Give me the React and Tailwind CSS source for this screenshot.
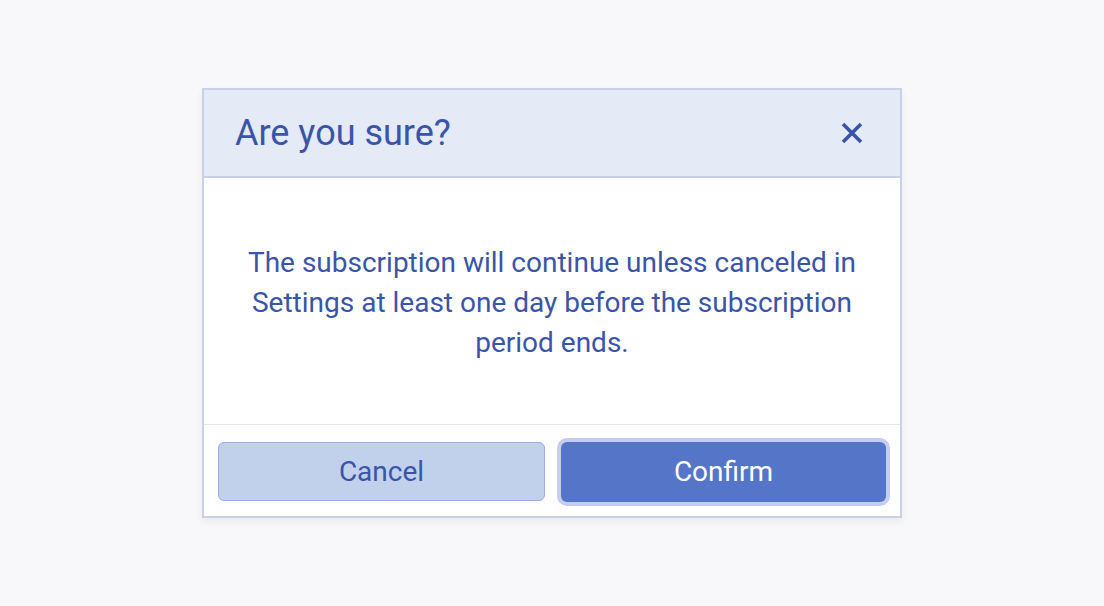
import React from 'react';

const CloseIcon = () => (
  <svg width="22" height="22" viewBox="0 0 22 22" fill="none">
    <path d="M2 2L20 20M20 2L2 20" stroke="#3a55a8" strokeWidth="3.6" strokeLinecap="butt" />
  </svg>
);

export default function App() {
  return (
    <div
      className="min-h-screen w-full bg-[#f8f8fa] flex justify-center pt-[88px]"
      style={{ fontFamily: 'Roboto, "Liberation Sans", sans-serif' }}
    >
      <div className="w-[700px] h-[430px] flex flex-col bg-white border-2 border-[#c8d0ea] shadow-[0_4px_8px_rgba(0,0,0,0.06)]">
        <div className="h-[88px] flex items-center justify-between pl-[31px] pr-[37px] bg-[#e4eaf6] border-b-2 border-[#c5cfe9]">
          <h2 className="text-[36px] text-[#3a55a8]">Are you sure?</h2>
          <button className="flex items-center justify-center">
            <CloseIcon />
          </button>
        </div>
        <div className="flex-1 flex items-center justify-center px-10 pt-[4px] border-b border-[#e6e7ec]">
          <p className="text-[28px] leading-[40px] text-center text-[#3a55a8]">
            The subscription will continue unless canceled in Settings at least one day before the subscription period ends.
          </p>
        </div>
        <div className="flex gap-4 px-[14px] pt-[17px] pb-[14px]">
          <button className="flex-1 h-[59px] rounded-[6px] bg-[#c1d0eb] border border-[#9cafdd] text-[28px] text-[#3a55a8]">
            Cancel
          </button>
          <button className="flex-1 h-[60px] rounded-[6px] bg-[#5575c9] ring-4 ring-[#c5cdf1] text-[28px] text-white">
            Confirm
          </button>
        </div>
      </div>
    </div>
  );
}
